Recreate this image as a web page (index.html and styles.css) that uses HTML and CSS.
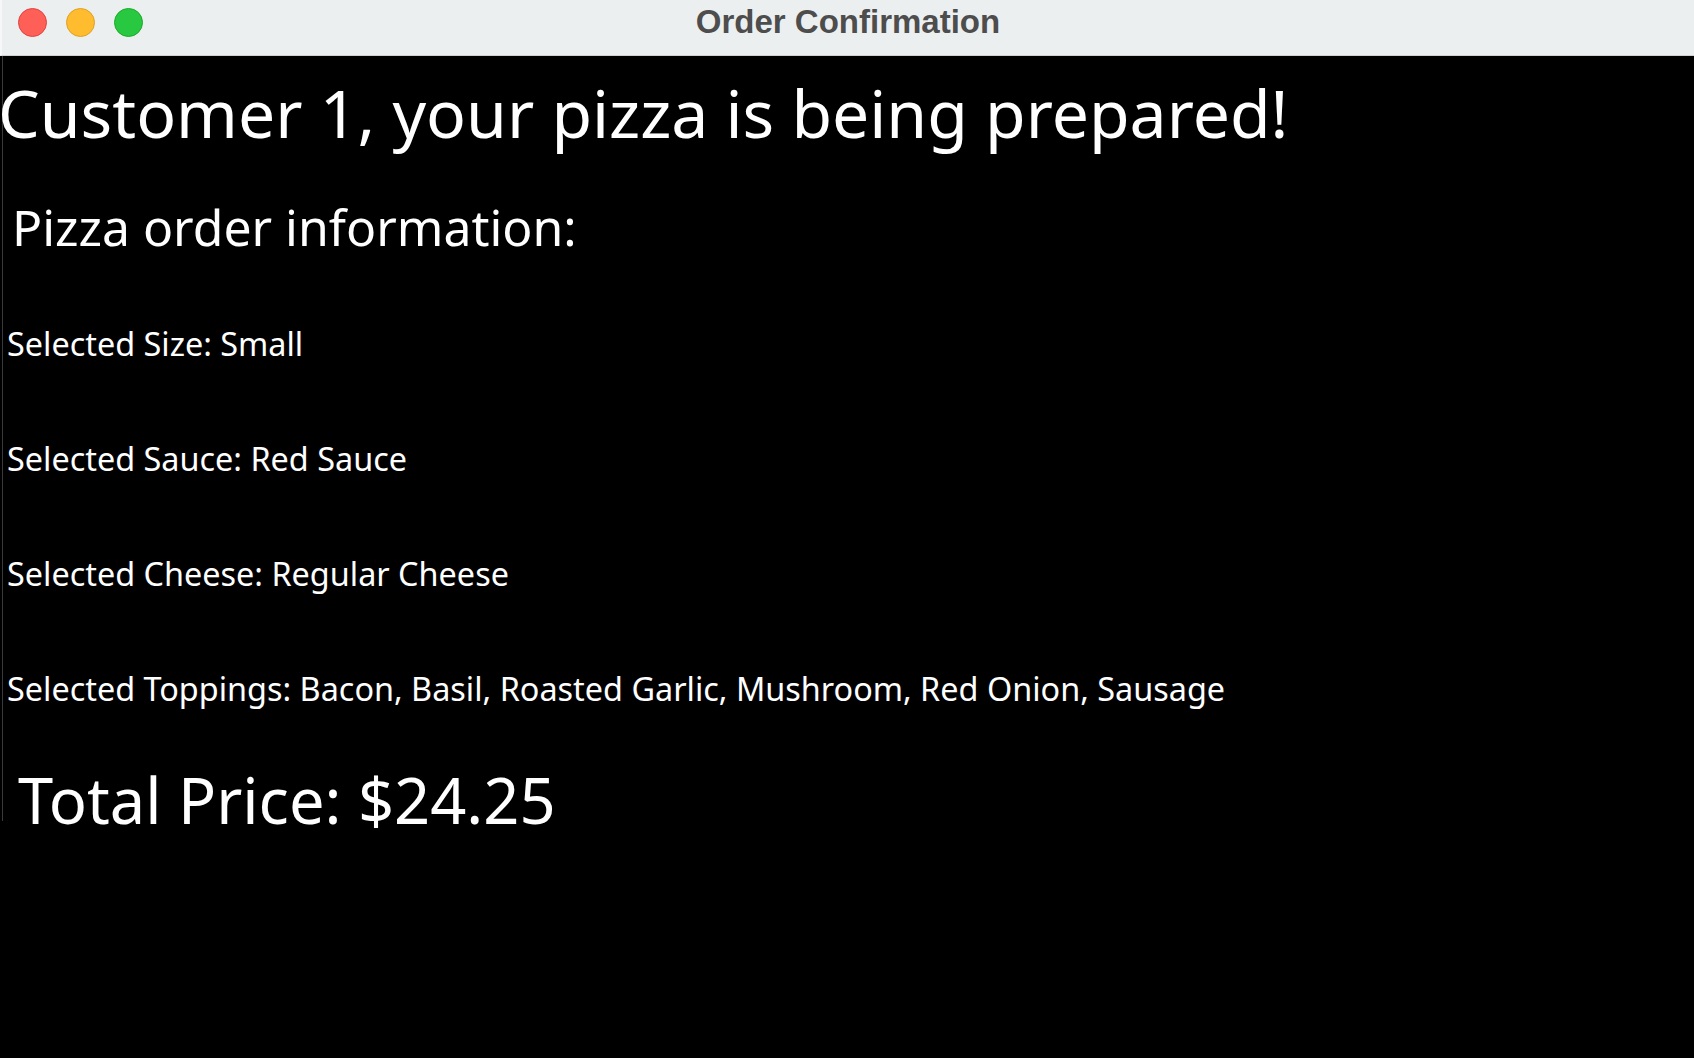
FILE: index.html
```html
<!DOCTYPE html>
<html lang="en">
<head>
<meta charset="utf-8">
<title>Order Confirmation</title>
<link rel="stylesheet" href="styles.css">
</head>
<body>
<div class="window">
  <header class="titlebar">
    <div class="lights">
      <span class="light light-red"></span>
      <span class="light light-yellow"></span>
      <span class="light light-green"></span>
    </div>
    <div class="title">Order Confirmation</div>
    <div class="spacer"></div>
  </header>
  <main class="content">
    <div class="row heading">Customer 1, your pizza is being prepared!</div>
    <div class="row subheading">Pizza order information:</div>
    <div class="row item">Selected Size: Small</div>
    <div class="row item">Selected Sauce: Red Sauce</div>
    <div class="row item">Selected Cheese: Regular Cheese</div>
    <div class="row item">Selected Toppings: Bacon, Basil, Roasted Garlic, Mushroom, Red Onion, Sausage</div>
    <div class="row total">Total Price: $24.25</div>
  </main>
</div>
</body>
</html>
```
FILE: styles.css
```css
html, body {
  margin: 0;
  padding: 0;
  background: #000;
  height: 100%;
}

.window {
  display: flex;
  flex-direction: column;
  min-height: 100%;
  background: #000;
}

.titlebar {
  display: grid;
  grid-template-columns: 1fr auto 1fr;
  align-items: center;
  height: 56px;
  box-sizing: border-box;
  padding-bottom: 11px;
  border-left: 2px solid #f7f7f7;
  background: #eceff0;
  border-bottom: 1px solid #cfd2d3;
}

.lights {
  display: flex;
  align-items: center;
  gap: 19px;
  padding-left: 16px;
}

.light {
  width: 27px;
  height: 27px;
  border-radius: 50%;
  display: block;
}

.light-red {
  background: #fe5f57;
  border: 1px solid #e0443e;
}

.light-yellow {
  background: #febc2e;
  border: 1px solid #dea123;
}

.light-green {
  background: #28c840;
  border: 1px solid #1aab29;
}

.title {
  font-family: "Liberation Sans", Arial, sans-serif;
  font-weight: bold;
  font-size: 33px;
  line-height: 34px;
  color: #4d4d4d;
  white-space: nowrap;
}

.content {
  display: flex;
  flex-direction: column;
  margin-left: 2px;
  border-left: 1px solid #3a3a3a;
  height: 765px;
  color: #fff;
  font-family: "Noto Sans", "DejaVu Sans", sans-serif;
  white-space: nowrap;
}

.row {
  flex: none;
}

.heading {
  font-size: 66.1px;
  height: 113px;
  line-height: 113px;
  margin-left: -5px;
}

.subheading {
  font-size: 49.9px;
  height: 117px;
  line-height: 117px;
  padding-left: 9px;
}

.item {
  font-size: 32.4px;
  height: 115px;
  line-height: 115px;
  padding-left: 4px;
}

.total {
  font-size: 63.2px;
  height: 108px;
  line-height: 108px;
  padding-left: 15px;
}
```
